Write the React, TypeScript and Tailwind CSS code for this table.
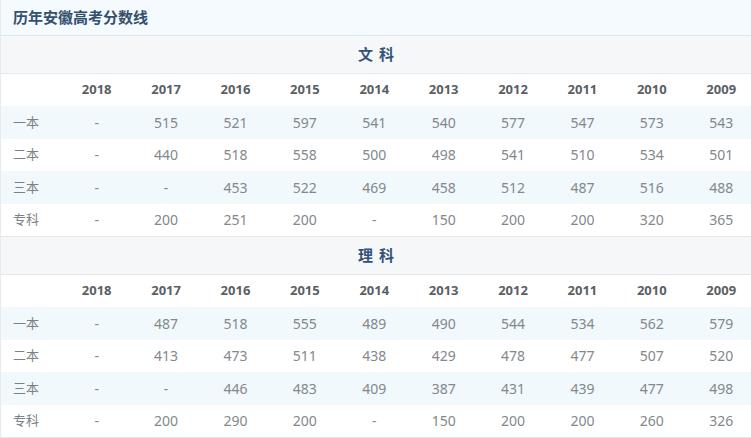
const years = ["2018", "2017", "2016", "2015", "2014", "2013", "2012", "2011", "2010", "2009"];

type Section = { title: string[]; rows: { label: string; values: string[] }[] };

const sections: Section[] = [
  {
    title: ["文", "科"],
    rows: [
      { label: "一本", values: ["-", "515", "521", "597", "541", "540", "577", "547", "573", "543"] },
      { label: "二本", values: ["-", "440", "518", "558", "500", "498", "541", "510", "534", "501"] },
      { label: "三本", values: ["-", "-", "453", "522", "469", "458", "512", "487", "516", "488"] },
      { label: "专科", values: ["-", "200", "251", "200", "-", "150", "200", "200", "320", "365"] },
    ],
  },
  {
    title: ["理", "科"],
    rows: [
      { label: "一本", values: ["-", "487", "518", "555", "489", "490", "544", "534", "562", "579"] },
      { label: "二本", values: ["-", "413", "473", "511", "438", "429", "478", "477", "507", "520"] },
      { label: "三本", values: ["-", "-", "446", "483", "409", "387", "431", "439", "477", "498"] },
      { label: "专科", values: ["-", "200", "290", "200", "-", "150", "200", "200", "260", "326"] },
    ],
  },
];

const grid = "grid grid-cols-[61px_repeat(10,69.4px)] items-center";

function ScoreSection({ section }: { section: Section }) {
  return (
    <div className="border-b border-[#e3e6e8]">
      <div className="flex h-[38px] items-center justify-center gap-[6px] border-b border-[#e6e8ea] bg-[#f6f7f8] text-[15px] font-bold text-[#33527a]">
        {section.title.map((c) => (
          <span key={c}>{c}</span>
        ))}
      </div>
      <div className={`${grid} h-[32px] bg-white text-[13px] font-bold text-[#5a5f64]`}>
        <span />
        {years.map((y) => (
          <span key={y} className="text-center">
            {y}
          </span>
        ))}
      </div>
      {section.rows.map((row, i) => (
        <div
          key={row.label}
          className={`${grid} h-[32.5px] text-[14px] text-[#83888c] ${i % 2 === 0 ? "bg-[#f1f9fc]" : "bg-white"}`}
        >
          <span className="pl-[12px] text-[13px] text-[#7c8185]">{row.label}</span>
          {row.values.map((v, j) => (
            <span key={j} className="text-center">
              {v}
            </span>
          ))}
        </div>
      ))}
    </div>
  );
}

export default function App() {
  return (
    <div
      className="h-[438px] w-[751px] overflow-hidden border-l border-[#e6ebee] bg-white"
      style={{ fontFamily: '"Noto Sans", "Noto Sans CJK SC", sans-serif' }}
    >
      <div className="flex h-[36px] items-center border-b border-[#dde7ed] bg-[#f4fafd] pl-[12px] text-[15px] font-bold text-[#34506f]">
        历年安徽高考分数线
      </div>
      {sections.map((s) => (
        <ScoreSection key={s.title.join("")} section={s} />
      ))}
    </div>
  );
}
